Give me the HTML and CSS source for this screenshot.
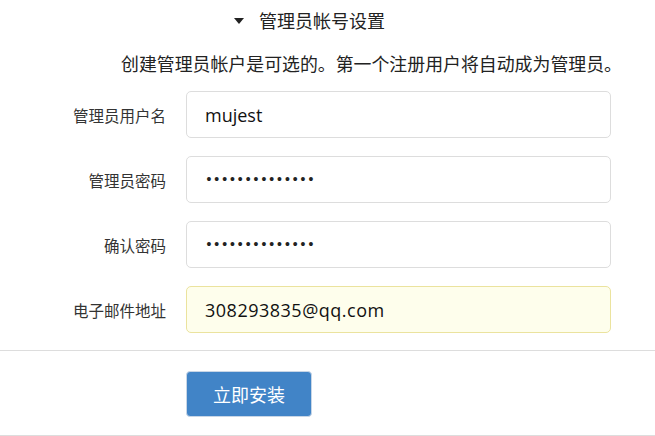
FILE: index.html
```html
<!DOCTYPE html>
<html lang="zh-CN">
<head>
<meta charset="utf-8">
<link rel="stylesheet" href="styles.css">
</head>
<body>
<div class="page">
  <div class="title">
    <span class="caret"></span>
    <span class="title-text">管理员帐号设置</span>
  </div>
  <p class="desc">创建管理员帐户是可选的。第一个注册用户将自动成为管理员。</p>
  <div class="form">
    <div class="row">
      <label class="label">管理员用户名</label>
      <div class="field">mujest</div>
    </div>
    <div class="row">
      <label class="label">管理员密码</label>
      <div class="field dots">••••••••••••••</div>
    </div>
    <div class="row">
      <label class="label">确认密码</label>
      <div class="field dots">••••••••••••••</div>
    </div>
    <div class="row">
      <label class="label">电子邮件地址</label>
      <div class="field autofill">308293835@qq.com</div>
    </div>
  </div>
  <div class="actions">
    <button class="btn">立即安装</button>
  </div>
</div>
</body>
</html>
```
FILE: styles.css
```css
html, body {
  margin: 0;
  padding: 0;
  background: #fff;
}
body {
  font-family: "Noto Sans CJK SC", "Noto Sans", sans-serif;
  color: #333;
  width: 655px;
  height: 436px;
  overflow: hidden;
}
.title {
  display: flex;
  align-items: center;
  height: 40px;
  padding-left: 234px;
}
.caret {
  width: 0;
  height: 0;
  border-left: 5px solid transparent;
  border-right: 5px solid transparent;
  border-top: 6px solid #222;
  margin-right: 15px;
  margin-top: 1px;
}
.title-text {
  font-size: 18px;
  color: #222;
  line-height: 24px;
}
.desc {
  margin: 0;
  padding-left: 121px;
  font-size: 17.9px;
  line-height: 24px;
  height: 24px;
  margin-top: 11px;
  color: #222;
  white-space: nowrap;
}
.form {
  display: flex;
  flex-direction: column;
  gap: 18px;
  padding-top: 16px;
  padding-bottom: 17px;
  border-bottom: 1px solid #ddd;
}
.row {
  display: flex;
  align-items: center;
  gap: 20px;
}
.label {
  width: 166px;
  text-align: right;
  font-size: 15.5px;
  color: #333;
  white-space: nowrap;
}
.field {
  box-sizing: border-box;
  width: 425px;
  height: 47px;
  border: 1px solid #ddd;
  border-radius: 5px;
  padding-left: 18px;
  display: flex;
  align-items: center;
  font-family: "Open Sans", "Noto Sans", sans-serif;
  font-size: 18px;
  color: #111;
}
.dots {
  font-family: "DejaVu Sans", sans-serif;
  font-size: 13.3px;
  letter-spacing: 0;
  color: #222;
}
.autofill {
  background: #fefeec;
  border-color: #ebe39e;
  letter-spacing: 0.5px;
}
.actions {
  padding: 20px 0 18px 186px;
  border-bottom: 1px solid #ddd;
}
.btn {
  box-sizing: border-box;
  width: 126px;
  height: 46px;
  background: #4184c7;
  border: 1px solid #c8d6e6;
  border-radius: 4px;
  color: #fff;
  font-family: "Noto Sans CJK SC", sans-serif;
  font-size: 18px;
  padding: 0;
}
```
